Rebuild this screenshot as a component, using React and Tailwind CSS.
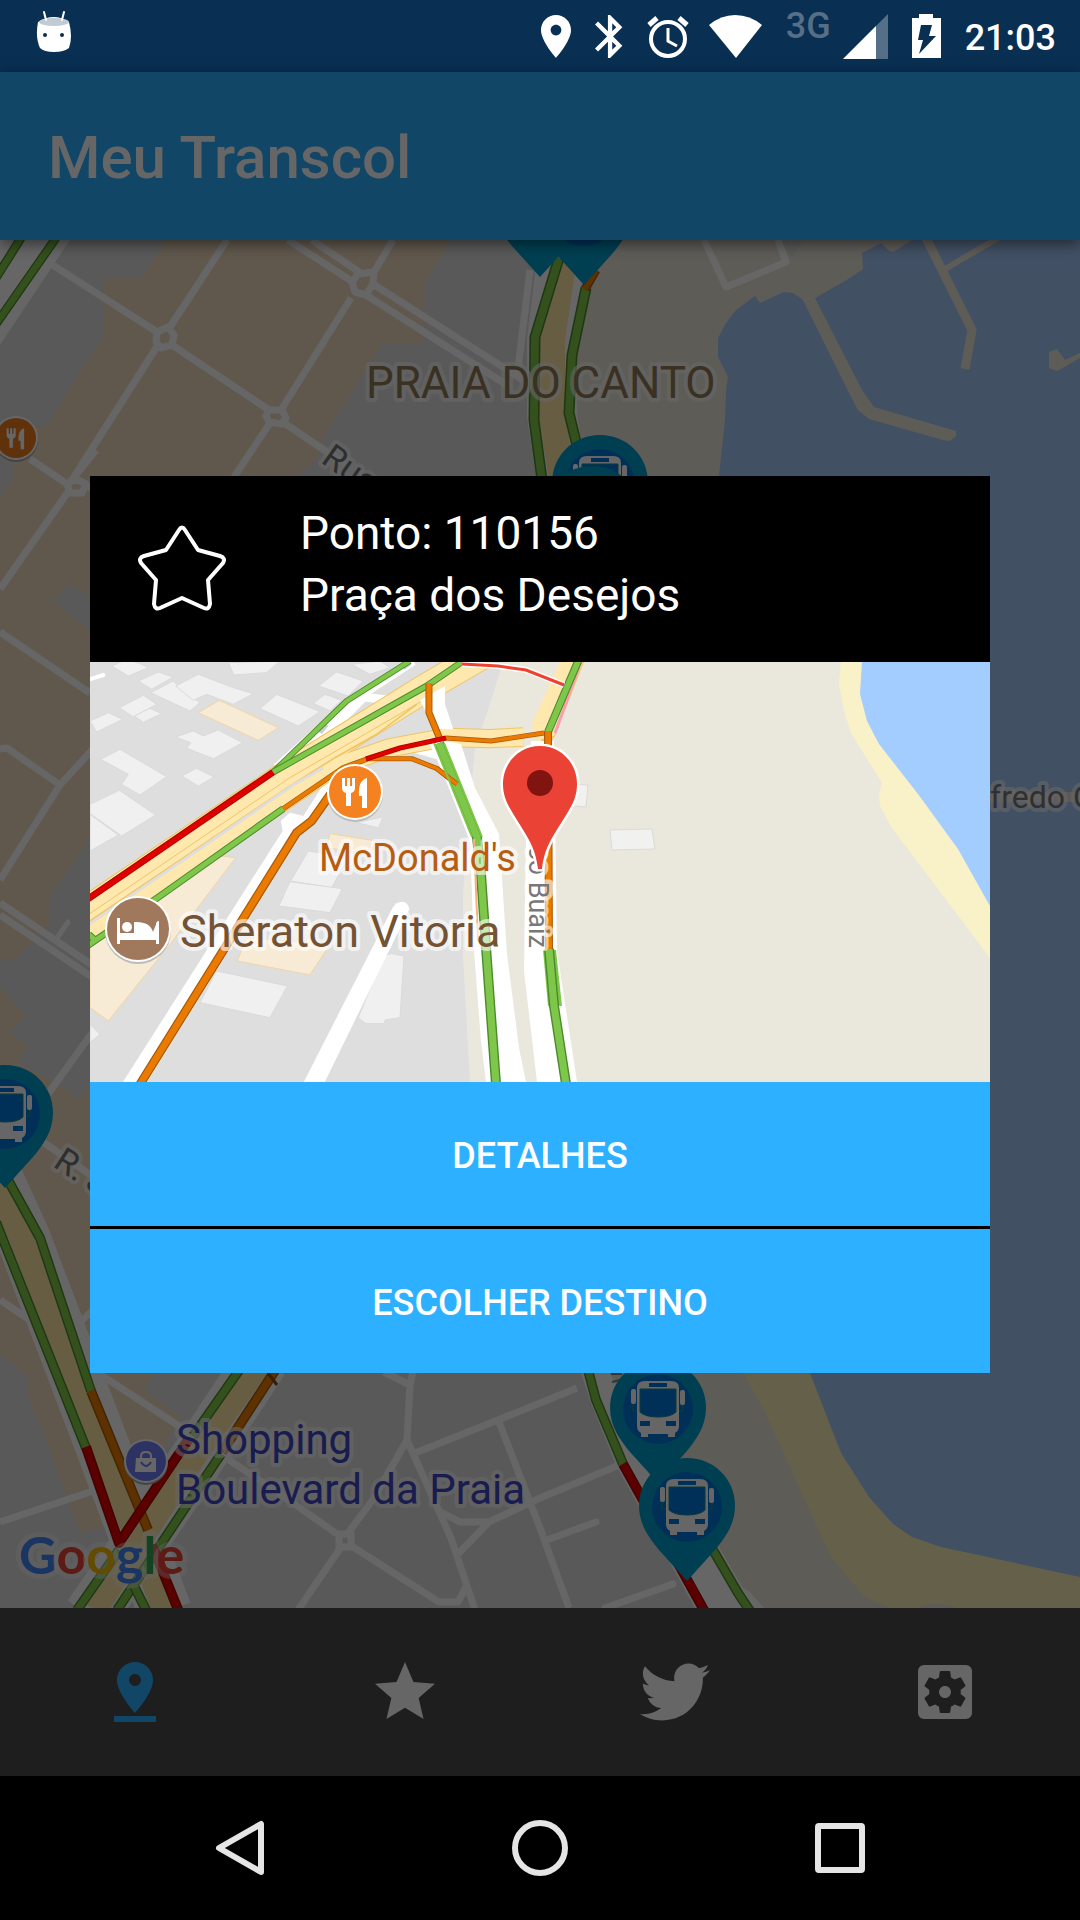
import React from "react";
import { MdPinDrop, MdStar, MdSettingsApplications } from "react-icons/md";
import { FaTwitter } from "react-icons/fa";

const GREEN = ["#4c8a2c", "#7fc74a"];
const ORANGE = ["#a85a08", "#eb7a00"];
const RED = ["#a80000", "#e00000"];

function Traffic({ d, tone, w = 9 }) {
  return (
    <g fill="none" strokeLinejoin="round">
      <path d={d} stroke={tone[0]} strokeWidth={w} />
      <path d={d} stroke={tone[1]} strokeWidth={w * 0.72} />
    </g>
  );
}

function Label({ x, y, size, fill, children, rotate, anchor, halo = 8 }) {
  return (
    <text
      x={x}
      y={y}
      fontSize={size}
      fill={fill}
      stroke="#ffffff"
      strokeOpacity="0.6"
      strokeWidth={halo}
      strokeLinejoin="round"
      paintOrder="stroke"
      textAnchor={anchor}
      transform={rotate ? `rotate(${rotate} ${x} ${y})` : undefined}
    >
      {children}
    </text>
  );
}

function Fork({ x, y, s }) {
  return (
    <g transform={`translate(${x} ${y}) scale(${s})`} fill="#fff">
      <path d="M-12 -14h3v8h2v-8h3v8h2v-8h3v10q0 4 -4 5v13h-5v-13q-4 -1 -4 -5z" />
      <path d="M13 -14v30h-5v-12h-3q-1 -16 8 -18z" />
    </g>
  );
}

function BusPin({ x, y }) {
  return (
    <g transform={`translate(${x} ${y})`}>
      <path
        d="M0 0C27 0 48 21 48 48C48 66 38 80 28 92L0 123L-28 92C-38 80 -48 66 -48 48C-48 21 -27 0 0 0Z"
        fill="#009ecd"
      />
      <circle cy="49" r="35" fill="#0078dc" />
      <g fill="#fff">
        <path d="M-21 28Q-21 21 -13 21H13Q21 21 21 28V66Q21 71 17 73V77H10V74H-10V77H-17V73Q-21 71 -21 66Z" />
        <rect x="-27" y="29" width="5" height="15" rx="2" />
        <rect x="22" y="30" width="5" height="15" rx="2" />
      </g>
      <path d="M-25 44v7h4M25 45v6h-4" fill="none" stroke="#2f9c6a" strokeWidth="1" />
      <path d="M-18 29H18V52Q13 57 0 57Q-13 57 -18 52Z" fill="#0078dc" stroke="#1c8f8f" strokeWidth="1" />
      <path d="M-9 23H9V27H-9ZM-18 61H-8V66H-18ZM8 61H18V66H8Z" fill="#0078dc" />
    </g>
  );
}

function CityMap() {
  return (
    <svg
      className="block min-h-0 w-full flex-1"
      viewBox="0 240 1080 1368"
      preserveAspectRatio="xMidYMid slice"
      fontFamily="Roboto, sans-serif"
      role="img"
      aria-label="Mapa de pontos de ônibus"
    >
      <rect y="240" width="1080" height="1368" fill="#dfdfdf" />
      <g fill="#f2dcc0">
        <path d="M165 240L143 277H109L103 282V337L62 400L47 426H13V479L0 497V960H15L49 925V897L90 839L296 480L305 466L313 465L324 447V437L380 347L389 343H423L425 283L451 240Z" />
        <path d="M0 987L25 1015L10 1033L28 1045L18 1063L50 1079L79 1099L90 1084L400 1084L155 1372L145 1391L182 1418L165 1445L115 1525L81 1534L27 1391L29 1378L0 1354Z" />
      </g>
      <path d="M54 602L68 584L90 596V630Z" fill="#dfdfdf" />

      <path
        d="M600 240H1080V1608H748L588 1373L500 1300L560 475L569 413L571 355L598 273Z"
        fill="#e9e6da"
      />
      <path d="M781 240H803L792 258Z" fill="#dfdfdf" />
      <path d="M743 1373L764 1410L788 1463L831 1557L865 1597L890 1608H1080V1300H720Z" fill="#faf0b7" />
      <path d="M918 1608Q936 1600 958 1608Z" fill="#e9e6da" />
      <path
        d="M912 240L893 252L888 250L881 243L862 253L863 269L845 281L815 298L862 390L874 407L956 431V436L950 441L943 440L869 419L858 410L850 395L803 300L793 293L784 292L760 303L755 296L736 310L726 323L718 338V357L728 377L726 390L725 420L719 475V1000L810 1373L841 1453L869 1497L893 1524L912 1537L941 1547L1080 1577V240Z"
        fill="#a5c8fa"
      />
      <g fill="none" stroke="#e9e6da">
        <path d="M926 238L972 330L965 369" strokeWidth="9" />
        <path d="M945 269L998 238" strokeWidth="6" />
      </g>
      <path d="M1049 352L1057 349L1065 360L1080 353V358L1057 371L1049 368Z" fill="#e9e6da" />
      <path d="M985 797H1080" stroke="#e8dcd8" strokeWidth="10" />

      <g fill="none" stroke="#fff" strokeWidth="7" strokeLinejoin="round">
        <path d="M48 262L157 332L168 327L174 335L172 345L161 348L156 342L157 332M172 345L269 410L282 410L286 418L281 424L269 422L266 416L269 410M284 423L345 464" />
        <path d="M227 240L170 327M158 345L74 477" />
        <path d="M393 240L374 272L373 284L366 295L355 292L352 282L358 274L374 272M351 298L281 410M270 423L234 477" />
        <path d="M288 240L353 282M312 240L362 274M366 295L510 387M373 284L523 380M530 270L517 377" />
        <path d="M704 240L726 287L786 262L778 240" />
        <path d="M30 459L67 484L78 477M68 492L0 589M67 484L70 493L82 493L86 484L78 480L68 482M82 482L92 489M72 480L96 450" />
        <path d="M0 632L90 693M0 749L7 748L60 785M92 750L60 785L0 880M0 903L92 965M0 915L92 977" />
        <path d="M57 938L68 922" strokeWidth="5" strokeLinecap="round" />
        <path d="M92 1033L48 1094M43 1142L92 1176M0 1300L30 1320M77 1325L92 1311M98 1373L182 1428M0 1522L93 1491" />
        <path d="M384 1372L410 1385L413 1372M410 1385L407 1440L451 1538L475 1610M407 1440L374 1498L348 1533M226 1458L293 1503L337 1534" />
        <path d="M339 1534H351V1547H339ZM341 1547L298 1610M353 1547L439 1602H458L467 1585" />
        <path d="M415 1453L498 1420L577 1388M499 1422L540 1528L569 1608M617 1466L540 1498L489 1522H460L439 1511M489 1522L458 1554" />
        <path d="M547 1540L596 1522M605 1608L673 1584" strokeLinecap="round" />
      </g>

      <path d="M0 240H70L0 345Z" fill="#fff" />
      <Traffic tone={GREEN} d="M21 238L-4 278" />
      <Traffic tone={GREEN} d="M56 238L-4 324" />

      <path d="M563 250L552 340V415L562 480" fill="none" stroke="#fff" strokeWidth="50" />
      <path d="M565 250L552 340V415L562 480" fill="none" stroke="#ffe8a5" strokeWidth="26" />
      <Traffic tone={GREEN} w={11} d="M559 258L535 337L534 420L542 480" />
      <Traffic tone={GREEN} w={11} d="M586 288L572 355L569 413L578 450" />
      <Traffic tone={ORANGE} w={9} d="M585 289L596 270" />

      <g fill="none" stroke="#fff">
        <path d="M-10 1165L24 1240L100 1440L165 1612" strokeWidth="54" />
        <path d="M262 1360L196 1460L90 1616" strokeWidth="54" />
      </g>
      <g fill="none" stroke="#ffe8a5">
        <path d="M-10 1165L22 1240L102 1447L165 1612" strokeWidth="24" />
        <path d="M262 1360L196 1454L95 1610" strokeWidth="24" />
      </g>
      <Traffic tone={GREEN} w={10} d="M-4 1222L86 1448" />
      <Traffic tone={GREEN} w={10} d="M8 1180L40 1238L91 1391" />
      <Traffic tone={ORANGE} w={10} d="M91 1391L148 1530" />
      <Traffic tone={GREEN} w={10} d="M240 1369L193 1436" />
      <Traffic tone={ORANGE} w={10} d="M276 1369L222 1452" />
      <Traffic tone={GREEN} w={10} d="M221 1454L117 1610" />
      <Traffic tone={GREEN} w={10} d="M119 1550L77 1610" />
      <Traffic tone={GREEN} w={10} d="M134 1586L146 1610" />
      <Traffic tone={RED} w={10} d="M152 1545L179 1612" />
      <Traffic tone={RED} w={10} d="M86 1447L119 1543L188 1440" />
      <path d="M268 1373L277 1385" stroke="#8a4a10" strokeWidth="3" />

      <path
        d="M581 1373L591 1403L616 1465L695 1608H764L750 1592L743 1588L719 1547L650 1450L610 1373Z"
        fill="#fff"
      />
      <Traffic tone={GREEN} w={10} d="M588 1370L596 1400L623 1464" />
      <Traffic tone={RED} w={10} d="M623 1464L705 1612" />
      <Traffic tone={GREEN} w={10} d="M706 1538L738 1593L750 1611" />
      <path d="M611 1374H622M612 1382L620 1380" stroke="#808080" strokeWidth="2" />

      <Label x={366} y={398} size={44} fill="#917a55">PRAIA DO CANTO</Label>
      <Label x={320} y={462} size={34} fill="#737373" rotate={35}>Rua</Label>
      <Label x={52} y={1166} size={34} fill="#737373" rotate={33}>R. J</Label>
      <Label x={990} y={808} size={32} fill="#787878">fredo G</Label>
      <Label x={176} y={1454} size={42} fill="#3e46c6">Shopping</Label>
      <Label x={176} y={1504} size={42} fill="#3e46c6">Boulevard da Praia</Label>

      <circle cx="16" cy="440" r="22" fill="#aaa" />
      <circle cx="16" cy="438" r="22" fill="#fff" />
      <circle cx="16" cy="438" r="20" fill="#ef7e20" />
      <Fork x={15} y={438} s={0.7} />

      <circle cx="146" cy="1463" r="22" fill="#aaa" />
      <circle cx="146" cy="1461" r="22" fill="#fff" />
      <circle cx="146" cy="1461" r="20" fill="#6f80f5" />
      <path d="M136 1458H156V1472H135Z" fill="#fff" />
      <path d="M141 1459V1456Q141 1452 146 1452Q151 1452 151 1456V1459" fill="none" stroke="#fff" strokeWidth="2" />
      <path d="M141 1462Q146 1470 151 1462" fill="none" stroke="#6f80f5" strokeWidth="2" />

      <BusPin x={540} y={154} />
      <BusPin x={584} y={162} />
      <BusPin x={600} y={435} />
      <BusPin x={592} y={466} />
      <BusPin x={5} y={1065} />
      <BusPin x={658} y={1360} />
      <BusPin x={687} y={1458} />

      <text
        x="19"
        y="1574"
        fontFamily="Lato, sans-serif"
        fontSize="52"
        fontWeight="700"
        stroke="#fff"
        strokeOpacity="0.4"
        strokeWidth="10"
        strokeLinejoin="round"
        paintOrder="stroke"
      >
        <tspan fill="#4285f4">G</tspan>
        <tspan fill="#ea4335">o</tspan>
        <tspan fill="#fbbc05">o</tspan>
        <tspan fill="#4285f4">g</tspan>
        <tspan fill="#34a853">l</tspan>
        <tspan fill="#ea4335">e</tspan>
      </text>
    </svg>
  );
}

const BUILDINGS = [
  "65,15 110,-5 150,8 175,20 115,45",
  "415,5 570,0 530,35 432,42",
  "145,60 205,33 250,48 185,85",
  "182,95 250,60 280,90 330,125 300,150",
  "257,75 325,40 430,80 490,98 430,130 350,100 310,118",
  "88,140 160,103 200,130 130,168",
  "133,165 180,142 215,158 160,184",
  "0,180 55,155 98,175 20,213",
  "510,143 560,100 690,152 625,195",
  "685,75 740,33 820,60 775,105",
  "670,127 705,100 755,118 720,150",
  "257,228 310,210 340,225 385,207 458,245 370,293 290,262 302,245",
  "32,295 90,265 230,347 150,402 95,370 115,340",
  "275,345 320,322 372,348 325,375",
  "0,430 88,388 197,462 95,525 0,458",
  "0,460 85,522 0,570",
  "655,570 775,590 725,680 602,660",
  "600,662 757,683 720,755 567,735",
  "380,930 592,975 540,1070 330,1025",
  "880,885 905,878 942,885 930,1070 885,1077 883,1088 828,1088 805,1070",
  "800,485 880,467 865,500",
  "785,10 870,0 900,20 840,40",
  "0,1090 30,1120 0,1145",
];

const SHOPS = [
  "388,118 565,200 505,238 325,155",
  "345,580 437,590 240,850 55,1080 0,1040 0,860",
  "720,518 860,540 840,580 710,560",
  "470,830 720,850 660,942 442,900",
];

function StopMap() {
  return (
    <svg
      className="block w-full"
      viewBox="90 661 900 420"
      fontFamily="Roboto, sans-serif"
      role="img"
      aria-label="Mapa do ponto Praça dos Desejos"
    >
      <rect x="90" y="661" width="900" height="420" fill="#dedede" />
      <path d="M503 661L490 703L475 747L470 800L463 893V953L470 1081H990V661Z" fill="#eae8dd" />
      <path d="M841 661L839 683L844 710L851 732L882 782L879 793L880 805L892 827L990 957V661Z" fill="#f9f1c8" />
      <path d="M862 661L860 693L867 720L879 743L918 793L958 848L990 905V661Z" fill="#a3ccff" />

      <g transform="translate(90 660) scale(0.3333)">
        <g fill="#f0f0f0" stroke="#dadada" strokeWidth="3">
          {BUILDINGS.map((points) => (
            <polygon key={points} points={points} />
          ))}
        </g>
        <g fill="#f8ebd5" stroke="#f0d5a5" strokeWidth="3">
          {SHOPS.map((points) => (
            <polygon key={points} points={points} />
          ))}
        </g>
        <path d="M-10 58L40 42" stroke="#fff" strokeWidth="12" strokeLinecap="round" />
        <path d="M97 1266H170L640 510L720 400L720 340L640 465L600 455L572 480L578 510Z" fill="#fff" />
        <path d="M640 1266H703L958 745Q955 722 935 722Q918 722 908 740Z" fill="#fff" />
        <path d="M560 320L770 130L970 0M800 105L900 118M640 250L760 170L820 110" fill="none" stroke="#fff" strokeWidth="26" />
        <path d="M690 215L710 190M940 20L960 5" stroke="#ccd" strokeWidth="14" />
        <path d="M850 280L960 272L1060 300L1110 380L1080 260L900 265Z" fill="#fff" />
        <g fill="none" strokeLinejoin="round">
          <path d="M-30 762L590 342L700 272L1000 85L1180 -20" stroke="#edc566" strokeWidth="88" />
          <path d="M-30 838L570 428L735 318L900 260L1070 229L1200 233L1300 228" stroke="#edc566" strokeWidth="58" />
          <path d="M-30 762L590 342L700 272L1000 85L1180 -20" stroke="#ffe8ad" strokeWidth="82" />
          <path d="M-30 838L570 428L735 318L900 260L1070 229L1200 233L1300 228" stroke="#ffe8ad" strokeWidth="52" />
          <path d="M-30 800L585 385L735 290L860 220L980 130" stroke="#edc566" strokeWidth="5" />
          <path d="M-30 808L610 372L700 320" stroke="#dedede" strokeWidth="9" />
          <path d="M-30 778L600 350L1000 118" stroke="#edc566" strokeWidth="3" />
        </g>
        <path d="M990 118L1065 75L1065 130L1090 205H1035Z" fill="#fff" />
      </g>

      <path d="M541 737L566 661H584L555 735L543 750Z" fill="#edc566" />
      <path d="M532 722L560 661H583L554 735L535 740Z" fill="#ffe8ad" />
      <path d="M555 732L581 661" stroke="#ff9db0" strokeWidth="3" />

      <path d="M427 737L461 743L475 787L499 833L507 953L519 1047L526 1081H486L481 1040L474 950L470 840L442 770Z" fill="#fff" />
      <path d="M531 740H554L557 950L577 1081H537L524 970L526 840Z" fill="#fff" />

      <g transform="translate(90 660) scale(0.3333)">
        <Traffic tone={ORANGE} w={27} d="M150 1270L620 515L665 480L725 395" />
        <Traffic tone={RED} w={20} d="M-5 713L550 333" />
        <Traffic tone={GREEN} w={18} d="M550 333L770 120L960 0" />
        <Traffic tone={GREEN} w={20} d="M550 333L1010 75L1120 0" />
        <Traffic tone={GREEN} w={21} d="M-10 856L200 712L580 443M-4 820L16 838" />
        <Traffic tone={ORANGE} w={16} d="M580 443L760 320L830 295" />
        <Traffic tone={ORANGE} w={15} d="M830 293H965L1040 322L1100 370" />
        <Traffic tone={ORANGE} w={21} d="M1017 68V155L1048 230" />
      </g>
      <Traffic tone={ORANGE} w={5} d="M446 737L491 740L544 732" />
      <Traffic tone={RED} w={5} d="M366 758L400 747L446 737" />
      <Traffic tone={GREEN} w={10} d="M439 742L477 836L481 873L487 960L496 1083" />
      <Traffic tone={ORANGE} w={5} d="M436 767L457 783" />
      <path d="M434 742L472 836M444 742L482 836" stroke="#7fc74a" strokeWidth="2" />
      <path d="M474 838L478 940" stroke="#f3b083" strokeWidth="2" />
      <Traffic tone={GREEN} w={8} d="M548 731L579 658" />
      <Traffic tone={ORANGE} w={8} d="M548 730L549 948" />
      <path d="M543 949H556L562 1005H548Z" fill="#7fc74a" />
      <Traffic tone={GREEN} w={10} d="M549 948L554 1005L566 1083" />
      <path d="M462 663L498 665L526 669L564 684" fill="none" stroke="#fff" strokeWidth="6" />
      <path d="M462 663L498 665L526 669L564 684" fill="none" stroke="#f04030" strokeWidth="3" />

      <g fill="#f1f1f0" stroke="#dadada">
        <path d="M610 829L652 828L655 848L612 849Z" />
        <path d="M572 783L588 784L586 806L572 805Z" />
      </g>

      <Label x={529} y={947} size={27} fill="#787878" rotate={90} anchor="end" halo={9}>co Buaiz</Label>
      <Label x={319} y={870} size={38} fill="#b85c10">McDonald's</Label>
      <Label x={180} y={946} size={45} fill="#735334">Sheraton Vitoria</Label>

      <circle cx="355" cy="793" r="28" fill="#bbb" />
      <circle cx="355" cy="791" r="28" fill="#fff" />
      <circle cx="355" cy="791" r="26" fill="#f58220" />
      <Fork x={354} y={791} s={1} />

      <circle cx="138" cy="930" r="33" fill="#bbb" />
      <circle cx="138" cy="928" r="33" fill="#fff" />
      <circle cx="138" cy="928" r="31" fill="#a0785c" />
      <path d="M117 917h3v21h36v-14q0 -4 3 -4v23h-3v-5h-36v5h-3z" fill="#fff" />
      <circle cx="127" cy="926" r="5" fill="#fff" />
      <path d="M120 932H157V939H120Z" fill="#fff" />
      <path d="M134 934V921Q150 920 153 931L157 921V934Z" fill="#fff" />

      <path
        d="M540 745C561 745 577 762 577 783C577 793 574 801 569 809C556 832 545 842 542 868H538C535 842 524 832 511 809C506 801 503 793 503 783C503 762 519 745 540 745Z"
        fill="#ea4335"
        stroke="#fff"
        strokeWidth="5"
        paintOrder="stroke"
      />
      <circle cx="540" cy="782" r="13" fill="#811411" />
    </svg>
  );
}

function StatusBar() {
  return (
    <header className="flex h-18 items-center bg-[#092f52] pr-6 pl-9 font-medium text-white">
      <svg width="36" height="44" viewBox="0 0 36 44" className="mb-2" aria-label="Android">
        <path d="M2 12Q18 2 33 12Q37 27 33 38Q28 42 18 42Q8 42 4 38Q-1 27 2 12Z" fill="#fff" />
        <ellipse cx="18" cy="12" rx="15" ry="4" fill="#c2cad4" />
        <path d="M8 2L10 10M28 2L26 10" stroke="#fff" strokeWidth="2" strokeLinecap="round" />
        <circle cx="9" cy="25" r="2" fill="#092f52" />
        <circle cx="26" cy="25" r="2" fill="#092f52" />
      </svg>
      <svg width="30" height="43" viewBox="5 2 14 20" className="ml-auto" fill="#fff" aria-label="Localização">
        <path d="M12 2C8.130 2 5 5.130 5 9c0 5.250 7 13 7 13s7-7.750 7-13c0-3.870-3.130-7-7-7zm0 9.500c-1.380 0-2.500-1.120-2.500-2.500s1.120-2.500 2.500-2.500 2.500 1.120 2.500 2.500-1.120 2.500-2.500 2.500z" />
      </svg>
      <svg width="28" height="43" viewBox="5 2 13 20" className="ml-6" fill="#fff" aria-label="Bluetooth">
        <path d="M17.710 7.710L12 2h-1v7.590L6.410 5 5 6.410 10.590 12 5 17.590 6.410 19 11 14.410V22h1l5.710-5.710-4.300-4.290 4.300-4.290zM13 5.830l1.880 1.880L13 9.590V5.830zm1.880 10.460L13 18.170v-3.760l1.880 1.880z" />
      </svg>
      <svg width="42" height="43" viewBox="0 0 42 43" className="ml-6" fill="none" stroke="#fff" aria-label="Alarme">
        <circle cx="21" cy="24" r="17" strokeWidth="4" />
        <path d="M2 10L10 3M40 10L32 3" strokeWidth="5" />
        <path d="M21 13V26L30 31" strokeWidth="3" />
      </svg>
      <svg width="53" height="43" viewBox="0 0 53 43" className="ml-5" fill="#fff" aria-label="Wi-Fi">
        <path d="M0 10Q12 0 26 0Q41 0 53 10L27 43Z" />
      </svg>
      <span className="mb-5 ml-6 text-[36px] leading-10 text-[#566f88]">3G</span>
      <svg width="45" height="45" viewBox="0 0 45 45" className="ml-3" aria-label="Sinal">
        <path d="M0 45L45 0V45Z" fill="#566f88" />
        <path d="M0 45L33 12V45Z" fill="#fff" />
      </svg>
      <svg width="29" height="44" viewBox="0 0 29 44" className="ml-6" aria-label="Carregando">
        <path d="M7 0H21V4H29V44H0V4H7Z" fill="#fff" />
        <path d="M9 11H20L17 22H24L7 40L11 26H6Z" fill="#092f52" />
      </svg>
      <time className="ml-6 pt-1 text-[36px] leading-10">21:03</time>
    </header>
  );
}

function TabBar() {
  return (
    <nav className="grid h-42 grid-cols-4 bg-[#4b4b4b] text-white">
      <button aria-label="Mapa" className="flex items-center justify-center text-[#2db0ff]">
        <MdPinDrop size={72} />
      </button>
      <button aria-label="Favoritos" className="flex items-center justify-center">
        <MdStar size={72} />
      </button>
      <button aria-label="Twitter" className="flex items-center justify-center">
        <FaTwitter size={70} />
      </button>
      <button aria-label="Configurações" className="flex items-center justify-center">
        <MdSettingsApplications size={72} />
      </button>
    </nav>
  );
}

function StopDialog() {
  return (
    <section role="dialog" aria-label="Ponto 110156" className="w-5/6 bg-black text-white">
      <header className="flex items-center px-12 pt-[26px] pb-9">
        <button aria-label="Favoritar ponto" className="pt-2">
          <svg width="88" height="88" viewBox="138 524 88 88" fill="none" stroke="#fff" strokeWidth="4" strokeLinejoin="round">
            <path d="M179 530Q182 525 185 530L198 550L220 556Q226 558 223 563L208 580L210 604Q209 610 204 608L182 598L160 608Q155 610 154 604L156 580L141 563Q138 558 144 556L166 550Z" />
          </svg>
        </button>
        <div className="ml-[74px] text-[46px] leading-[62px]">
          <p>Ponto: 110156</p>
          <p>Praça dos Desejos</p>
        </div>
      </header>
      <StopMap />
      <div className="flex flex-col gap-[3px]">
        <button className="h-36 bg-[#2db0ff] pt-1 text-[36px] font-medium">DETALHES</button>
        <button className="h-36 bg-[#2db0ff] pt-1 text-[36px] font-medium">ESCOLHER DESTINO</button>
      </div>
    </section>
  );
}

export default function App() {
  return (
    <div className="flex min-h-screen flex-col bg-black font-[Roboto,sans-serif]">
      <StatusBar />
      <div className="grid flex-1">
        <div className="col-start-1 row-start-1 flex flex-col">
          <div className="relative z-10 flex h-42 items-center bg-[#2db0ff] px-12 pt-1 shadow-[0_4px_14px_rgba(0,0,0,0.5)]">
            <h1 className="text-[60px] font-medium text-white">Meu Transcol</h1>
          </div>
          <CityMap />
          <TabBar />
        </div>
        <div className="relative z-20 col-start-1 row-start-1 flex items-center justify-center bg-black/60">
          <StopDialog />
        </div>
      </div>
      <footer className="grid h-36 grid-cols-3 bg-black px-[90px]">
        <button aria-label="Voltar" className="flex items-center justify-center">
          <svg width="56" height="56" viewBox="0 0 56 56" fill="none" stroke="#e5e5e5" strokeWidth="6" strokeLinejoin="round">
            <path d="M49 4V52L7 28Z" />
          </svg>
        </button>
        <button aria-label="Início" className="flex items-center justify-center">
          <svg width="56" height="56" viewBox="0 0 56 56" fill="none" stroke="#e5e5e5" strokeWidth="6">
            <circle cx="28" cy="28" r="25" />
          </svg>
        </button>
        <button aria-label="Recentes" className="flex items-center justify-center">
          <svg width="50" height="50" viewBox="0 0 50 50" fill="none" stroke="#e5e5e5" strokeWidth="6">
            <rect x="3" y="3" width="44" height="44" rx="1" />
          </svg>
        </button>
      </footer>
    </div>
  );
}
